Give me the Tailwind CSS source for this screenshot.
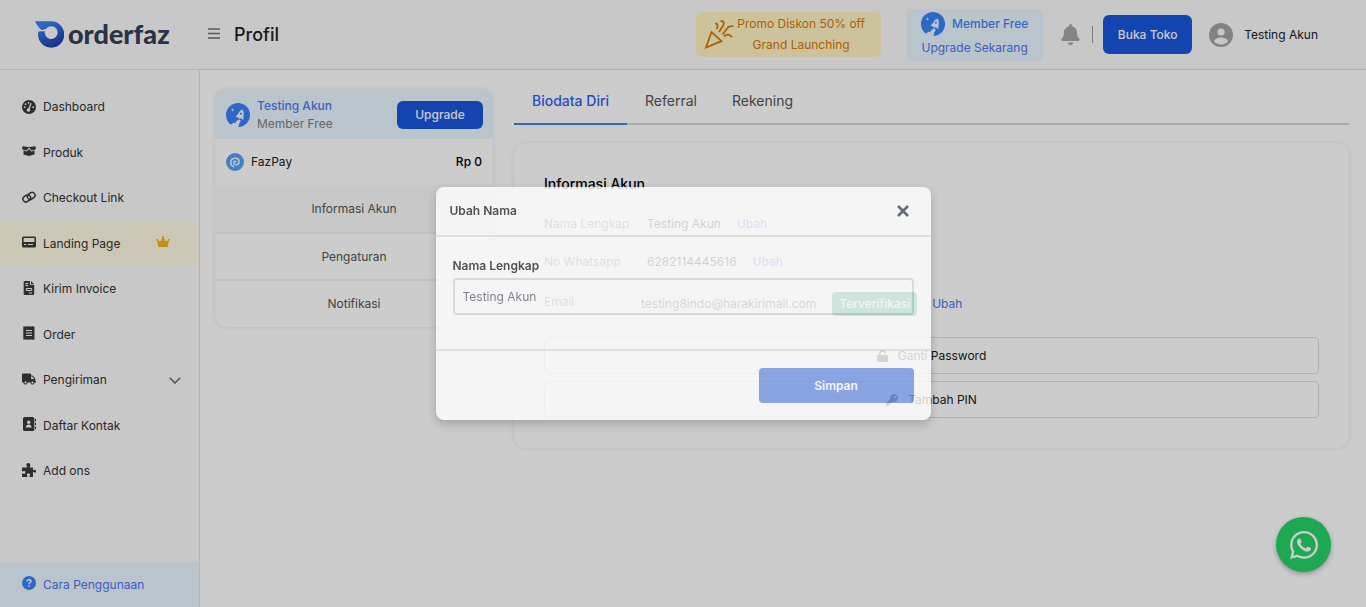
<!DOCTYPE html>
<html lang="id">
<head>
<meta charset="utf-8">
<meta name="viewport" content="width=device-width, initial-scale=1">
<title>Profil - orderfaz</title>
<script src="https://cdn.jsdelivr.net/npm/@tailwindcss/browser@4"></script>
</head>
<body class="flex h-screen flex-col overflow-hidden bg-white font-['Inter','Liberation_Sans',sans-serif] text-xs leading-5 text-[#333]">

<svg class="hidden">
  <symbol id="rocket" viewBox="0 0 24 24">
    <circle cx="12" cy="12" r="12" fill="#3b82f6"/>
    <path fill="#e8f5ff" d="M2.500 24c0-2 1.500-3.200 3.300-2.600.5-1.700 2.400-2.200 3.500-1.200.6-1.600 1.600-3 3.200-3.700l1.800.4c.6 1.300 0 2.700-1.400 3.600.6 1.100.2 2.500-.9 3.500z"/>
    <path fill="#edf6ff" d="M16.500 6.500c-2.200.8-3.500 2.200-4.200 4.200l-3 3.200 2.500.3 1.200 1.500 1.600-.4 2.600 1.800.4-4.600c.5-2.100.2-4.200-1.100-6zM6.500 5l.5 1.400 1.400.5-1.400.5-.5 1.400L6 7.400l-1.400-.5L6 6.400z"/>
    <circle cx="14.900" cy="10.800" r="1" fill="#3b82f6"/>
  </symbol>
</svg>

<header class="flex h-[70px] shrink-0 items-center border-b border-[#e1e1e1] bg-[#fafafa]">
  <a href="#" aria-label="orderfaz" class="ml-[35px] flex w-[172px] items-center gap-1">
    <svg class="h-[27px] w-[29px] shrink-0" viewBox="0 0 86 80">
      <defs><linearGradient id="lg" x1="0" y1="0" x2=".6" y2="1"><stop offset=".2" stop-color="#3b82f6"/><stop offset="1" stop-color="#1e40af"/></linearGradient></defs>
      <path fill="url(#lg)" d="M0 1H48A39 39 0 1 1 9 40V35Q9 30 14 30L29.500 30A19 19 0 1 0 32 24L20 26.500C12 22 5 12 0 1z"/>
    </svg>
    <span class="pb-[2px] font-['Lato','Inter',sans-serif] text-[27px] leading-7 font-black text-[#334155]">orderfaz</span>
  </a>
  <button type="button" aria-label="Menu" class="flex h-6 w-[14px] items-center pb-[2px]">
    <svg class="ml-px h-[11px] w-3" viewBox="0 0 12 11" fill="none" stroke="#707070" stroke-width="1.500"><path d="M0 1h12M0 5.500h12M0 10h12"/></svg>
  </button>
  <h1 class="ml-[13px] text-lg font-medium text-[#222]">Profil</h1>

  <div class="ml-auto flex items-center">
    <a href="#" class="flex h-[45px] w-[185px] items-center rounded-md bg-[#fff4c4] pb-px pl-2 text-[#d97706]">
      <svg class="h-[30px] w-[30px] shrink-0" viewBox="0 0 30 30" fill="none" stroke="currentColor" stroke-width="1.800"><path d="M2 28.500L7.500 13l10 9.200zM11 4.500c3 0 3.500 2.500 1.500 5.500M16.500 2c4 0 4 3 2 5.500l-3.500 5.500M29.500 7.500c-3-1-4-.5-5.500 1l-5.500 7M20 17.500c3-3 6-2 8 .8"/></svg>
      <span class="w-[134px] text-center leading-[21px] whitespace-nowrap">Promo Diskon 50% off<br>Grand Launching</span>
    </a>
    <a href="#" class="ml-[25px] flex h-[52px] w-[137px] flex-col items-center justify-center rounded-md bg-[#e8f5ff] pt-[2px] text-[#3f83f8]">
      <span class="flex items-center gap-[7px] font-medium"><svg class="h-6 w-6"><use href="#rocket"/></svg>Member Free</span>
      <span class="leading-6 text-[#4f74f4]">Upgrade Sekarang</span>
    </a>
    <button type="button" aria-label="Notifikasi" class="ml-[18px]">
      <svg class="h-[21px] w-[19px]" viewBox="0 0 448 512" fill="#a5a5a5"><path d="M224 512c35.300 0 63.900-28.600 63.900-64H160.100c0 35.400 28.600 64 63.900 64zm215.400-149.700c-19.300-20.800-55.500-52-55.500-154.300 0-77.700-54.500-139.900-127.900-155.200V32c0-17.700-14.300-32-32-32s-32 14.300-32 32v20.800C118.600 68.100 64.100 130.300 64.100 208c0 102.300-36.200 133.500-55.500 154.300-6 6.500-8.700 14.200-8.600 21.700.1 16.400 13 32 32.100 32h383.800c19.100 0 32-15.600 32.100-32 .1-7.500-2.600-15.300-8.600-21.700z"/></svg>
    </button>
    <span class="ml-3 h-[17px] w-px bg-[#999]"></span>
    <button type="button" class="ml-[10px] h-[39px] w-[89px] rounded-md bg-[#1a56db] font-medium text-white">Buka Toko</button>
    <a href="#" class="mr-12 ml-[17px] flex items-center gap-[11px] text-[#222]">
      <svg class="h-6 w-6" viewBox="0 0 24 24"><circle cx="12" cy="12" r="12" fill="#a3a3a3"/><circle cx="12" cy="9" r="3.600" fill="#fafafa"/><path fill="#fafafa" d="M5 18.500c1-3 4-4 7-4s6 1 7 4c-4 4-10 4-14 0z"/></svg>
      Testing Akun
    </a>
  </div>
</header>

<div class="flex min-h-0 flex-1">
  <aside class="flex w-[200px] shrink-0 flex-col border-r border-[#e1e1e1] bg-[#fafafa] pt-[15px]">
    <nav class="flex h-[408px] flex-col justify-between">
      <a href="#" class="flex h-11 items-center gap-[7px] pl-[22px]"><svg class="h-[14px] w-[14px]" viewBox="0 0 14 14"><circle cx="7" cy="7" r="7" fill="#3a3a3a"/><path d="M6.500 10L9 3.200" stroke="#fafafa" stroke-width="1.300"/><g fill="#fafafa"><circle cx="6.500" cy="10" r="1.800"/><circle cx="6.500" cy="2.800" r=".9"/><circle cx="3.600" cy="4.200" r=".9"/><circle cx="2.700" cy="7.200" r=".9"/><circle cx="11.200" cy="7.200" r=".9"/></g></svg>Dashboard</a>
      <a href="#" class="flex h-11 items-center gap-[7px] pl-[22px]"><svg class="mb-1 h-[14px] w-[14px]" viewBox="0 0 14 14" fill="#3a3a3a"><path d="M.6 2.200L7 3l6.400-.8L14 5.200l-4.300 1.200L7 3.500 4.300 6.400 0 5.200zM1.500 6.500l3.200.9L7 5l2.300 2.400 3.200-.9v4L7 12l-5.500-1.500z"/></svg>Produk</a>
      <a href="#" class="flex h-11 items-center gap-[7px] pl-[22px]"><svg class="mb-[2px] h-[14px] w-[14px]" viewBox="0 0 14 14" fill="none" stroke="#3a3a3a" stroke-width="1.500"><rect x="-4" y="-2.900" width="8" height="5.800" rx="2.900" transform="translate(4.800 8.400) rotate(-35)"/><rect x="-4" y="-2.900" width="8" height="5.800" rx="2.900" transform="translate(9.200 5.900) rotate(-35)"/></svg>Checkout Link</a>
      <a href="#" class="flex h-11 items-center gap-[7px] bg-[#fffae7] pl-[22px]"><svg class="mb-[3px] h-[14px] w-[14px]" viewBox="0 0 14 14"><path fill="#3a3a3a" fill-rule="evenodd" d="M1.500 1.500h11A1.500 1.500 0 0 1 14 3v8a1.500 1.500 0 0 1-1.500 1.500h-11A1.500 1.500 0 0 1 0 11V3a1.500 1.500 0 0 1 1.500-1.500zM1.600 3v4h10.800V3zM2 9v1.100h2.500V9zM6 9v1.100h5V9z"/></svg>Landing Page<svg class="mr-[29px] mb-1 ml-auto h-[11px] w-[14px]" viewBox="0 0 640 512" preserveAspectRatio="none" fill="#f4b622"><path d="M544 430H96v82h448zM592 128c-26.500 0-48 21.500-48 48 0 7.100 1.600 13.700 4.400 19.800L476 239.200c-15.400 9.200-35.300 4-44.200-11.600L350.300 85C361 76.200 368 63 368 48c0-26.500-21.500-48-48-48s-48 21.500-48 48c0 15 7 28.200 17.700 37l-81.500 142.600c-8.900 15.600-28.900 20.800-44.200 11.600l-72.300-43.400c2.700-6 4.400-12.700 4.400-19.800 0-26.500-21.500-48-48-48S0 149.500 0 176s21.500 48 48 48c2.600 0 5.200-.4 7.700-.8L98 470h444l42.300-246.800c2.500.4 5.100.8 7.700.8 26.500 0 48-21.500 48-48s-21.500-48-48-48z"/></svg></a>
      <a href="#" class="flex h-11 items-center gap-[7px] pl-[22px]"><svg class="mb-[3px] h-[14px] w-[14px]" viewBox="0 0 14 14"><path fill="#3a3a3a" d="M2 0h6v4h4.200v9q0 1-1 1H2.700q-1 0-1-1V1q0-1 1-1zM9 0l3.200 3.200H9z"/><path fill="none" stroke="#fafafa" d="M3.300 2.500h3M3.300 4.500h3M4.300 7.500h5.400v2H4.300zM7 12h3"/></svg>Kirim Invoice</a>
      <a href="#" class="flex h-11 items-center gap-[7px] pl-[22px]"><svg class="mb-[3px] h-[14px] w-[14px]" viewBox="0 0 14 14"><path fill="#3a3a3a" d="M1.300.2l1 .5L3.500 0l1.200.7L5.800 0 7 .7 8.200 0l1.100.7 1.200-.7 1.200.7.800-.5v13.600l-.8-.5-1.200.7-1.200-.7-1.100.7-1.200-.7-1.200.7-1.100-.7-1.200.7-1.200-.7-1 .5z"/><path stroke="#fafafa" stroke-width="1.100" d="M4 4.500h6M4 7h6M4 9.500h6"/></svg>Order</a>
      <a href="#" class="flex h-11 items-center gap-[7px] pl-[22px]"><svg class="mb-[3px] h-[12px] w-[14px]" viewBox="0 0 640 512" fill="#3a3a3a"><path d="M624 352h-16V243.900c0-12.700-5.100-24.900-14.100-33.900L494 110.100c-9-9-21.200-14.100-33.900-14.100H416V48c0-26.500-21.500-48-48-48H48C21.500 0 0 21.500 0 48v320c0 26.500 21.500 48 48 48h16c0 53 43 96 96 96s96-43 96-96h128c0 53 43 96 96 96s96-43 96-96h48c8.800 0 16-7.200 16-16v-32c0-8.800-7.200-16-16-16zM160 464c-26.500 0-48-21.500-48-48s21.500-48 48-48 48 21.500 48 48-21.500 48-48 48zm320 0c-26.500 0-48-21.500-48-48s21.500-48 48-48 48 21.500 48 48-21.500 48-48 48zm80-208H416V144h44.100l99.900 99.900V256z"/></svg>Pengiriman<svg class="mr-[18px] ml-auto h-[7px] w-3" viewBox="0 0 12 7" fill="none" stroke="#666" stroke-width="1.500"><path d="M.8.800L6 6 11.200.8"/></svg></a>
      <a href="#" class="flex h-11 items-center gap-[7px] pl-[22px]"><svg class="mb-[3px] h-[14px] w-[14px]" viewBox="0 0 14 14"><path fill="#3a3a3a" d="M2.500 0h8.300q1.500 0 1.500 1.500v11q0 1.500-1.500 1.500H2.500Q1 14 1 12.500v-11Q1 0 2.500 0zM13 1.800h1v2.500h-1zM13 5.800h1v2.500h-1zM13 9.800h1v2.500h-1z"/><circle cx="6.700" cy="5.200" r="1.700" fill="#fafafa"/><path fill="#fafafa" d="M3.700 10.500q.4-3 3-3t3 3z"/></svg>Daftar Kontak</a>
      <a href="#" class="flex h-11 items-center gap-[7px] pl-[22px]"><svg class="mb-[2px] h-[14px] w-[14px]" viewBox="0 0 14 14" fill="#3a3a3a"><path d="M0 4.500h4.800c.6-.8-.4-1.300-.4-2.500C4.400.9 5.200 0 6.400 0S8.300.9 8.300 2c0 1.200-.9 1.700-.4 2.500H11v2.700c.7.500 1-.5 1.700-.5.800 0 1.300.6 1.300 1.500s-.5 1.500-1.300 1.500c-.7 0-1-.9-1.700-.5V14H7.600c-.6-.8.500-1.200.5-2.200 0-.8-.7-1.300-1.600-1.300s-1.600.5-1.600 1.300c0 1 1 1.400.4 2.200H0v-3.500c.8-.5 1.100.4 1.900.4.900 0 1.400-.6 1.400-1.500S2.800 8 1.900 8C1.100 8 .8 8.800 0 8.300z"/></svg>Add ons</a>
    </nav>
    <a href="#" class="mt-auto flex h-[45px] items-center gap-[7px] bg-[#e8f5ff] pl-[22px] text-[#4f74f4]"><svg class="mb-[3px] h-[14px] w-[14px]" viewBox="0 0 14 14"><circle cx="7" cy="7" r="7" fill="#3b82f6"/><path fill="none" stroke="#e8f5ff" stroke-width="1.500" d="M5 5.500c0-2.400 4-2.200 4-.2 0 1.500-2 1.300-2 2.900M7 9.300v1.500"/></svg>Cara Penggunaan</a>
  </aside>

  <main class="flex min-w-0 flex-1 items-start pr-[17px] pl-[15px]">
    <section class="mt-[19px] w-[278px] shrink-0 overflow-hidden rounded-xl shadow-[0_0_4px_rgba(0,0,0,0.1)]">
      <div class="flex h-[50px] items-center bg-[#e8f5ff] pt-[2px] pr-[10px] pl-[11px]">
        <svg class="h-6 w-6"><use href="#rocket"/></svg>
        <div class="ml-[7px] leading-[18px]">
          <p class="font-medium text-[#4b7bf5]">Testing Akun</p>
          <p class="text-[#808080]">Member Free</p>
        </div>
        <button type="button" class="ml-auto h-7 w-[86px] rounded-md bg-[#1a56db] font-medium text-white">Upgrade</button>
      </div>
      <div class="flex h-[46px] items-center px-[11px] text-[#222]">
        <svg class="h-[18px] w-[18px]" viewBox="0 0 18 18"><circle cx="9" cy="9" r="9" fill="#56a0f5"/><path fill="none" stroke="#f0f7ff" stroke-width="1.500" d="M9.800 9.300c-.3-1.600-2.100-1.200-2 .4.200 3.300 5.600 2.300 5.400-1.200-.3-4.800-8.500-4.300-8.400.9 0 2.200 1.200 3.700 3.200 4.400"/></svg>
        <span class="ml-[7px]">FazPay</span>
        <span class="ml-auto font-medium text-black">Rp 0</span>
      </div>
      <nav class="flex flex-col text-center text-[#555]">
        <a href="#" class="h-[49px] border-b-2 border-[#f2f2f2] bg-[#fafafa] leading-[47px]">Informasi Akun</a>
        <a href="#" class="h-[47px] border-b-2 border-[#f2f2f2] leading-[46px]">Pengaturan</a>
        <a href="#" class="h-[46px] leading-[46px]">Notifikasi</a>
      </nav>
    </section>

    <div class="ml-[21px] min-w-0 flex-1">
      <nav class="flex h-[55px] border-b-2 border-[#d4d6d6] text-sm text-[#555]">
        <a href="#" class="h-[55px] border-b-2 border-[#3b82f6] px-[18px] pt-[21px] font-medium text-[#2f63ee]">Biodata Diri</a>
        <a href="#" class="px-[18px] pt-[21px]">Referral</a>
        <a href="#" class="px-[17px] pt-[21px]">Rekening</a>
      </nav>
      <section class="mt-[18px] rounded-xl px-[30px] pt-[31px] pb-[30px] shadow-[0_0_4px_rgba(0,0,0,0.1)]">
        <h2 class="text-sm font-medium text-black">Informasi Akun</h2>
        <div class="mt-5 flex text-[#222]"><span class="w-[103px] text-[#777]">Nama Lengkap</span>Testing Akun<a href="#" class="ml-4 text-[#4f74f4]">Ubah</a></div>
        <div class="mt-[18px] flex text-[#222]"><span class="w-[103px] text-[#777]">No Whatsapp</span>6282114445616<a href="#" class="ml-4 text-[#4f74f4]">Ubah</a></div>
        <div class="mt-5 flex h-6 items-center text-[#444]"><span class="w-[97px] pb-[5px] text-[#777]">Email</span>testing8indo@harakirimail.com<span class="ml-4 h-6 rounded bg-[#0e9f6e] px-[7px] leading-6 font-medium text-white">Terverifikasi</span><a href="#" class="ml-[15px] text-[#4f74f4]">Ubah</a></div>
        <button type="button" class="mt-[21px] flex h-[37px] w-full items-center justify-center gap-[10px] rounded border border-[#d9dde3] text-[#222]">
          <svg class="h-3 w-[11px]" viewBox="0 0 11 12"><rect y="5" width="11" height="7" rx="1.200" fill="#333"/><path fill="none" stroke="#333" stroke-width="1.500" d="M3 5.500V3.300c0-3.300 5-3.300 5 0"/></svg>Ganti Password
        </button>
        <button type="button" class="mt-[7px] flex h-[37px] w-full items-center justify-center gap-[10px] rounded border border-[#d9dde3] text-[#222]">
          <svg class="h-3 w-3" viewBox="0 0 12 12"><path fill="#333" fill-rule="evenodd" d="M8 0a4 4 0 1 1-1.300 7.800L5.500 9H4.300v1.500H2.800V12H0V9.300l4.200-4.200A4 4 0 0 1 8 0zm1 2a1 1 0 1 0 .01 0z"/></svg>Tambah PIN
        </button>
      </section>
    </div>
  </main>
</div>

<a href="#" aria-label="WhatsApp" class="fixed right-[35px] bottom-[35px] flex h-[55px] w-[55px] items-center justify-center rounded-full bg-[#25d366] shadow-[0_2px_5px_rgba(0,0,0,0.3)]">
  <svg class="h-7 w-7" viewBox="0 32 448 448" fill="#fff"><path d="M380.900 97.100C339 55.100 283.200 32 223.900 32c-122.400 0-222 99.600-222 222 0 39.100 10.200 77.300 29.600 111L0 480l117.700-30.900c32.400 17.700 68.900 27 106.100 27h.1c122.300 0 224.100-99.600 224.100-222 0-59.300-25.200-115-67.100-157zm-157 341.600c-33.200 0-65.700-8.900-94-25.700l-6.700-4-69.800 18.300L72 359.200l-4.400-7c-18.500-29.400-28.200-63.300-28.200-98.200 0-101.700 82.800-184.500 184.600-184.500 49.300 0 95.600 19.200 130.400 54.100 34.800 34.900 56.200 81.200 56.100 130.500 0 101.800-84.900 184.600-186.600 184.600zm101.200-138.200c-5.500-2.800-32.800-16.200-37.900-18-5.100-1.900-8.800-2.800-12.500 2.800-3.700 5.600-14.300 18-17.600 21.800-3.200 3.700-6.500 4.200-12 1.400-32.600-16.300-54-29.100-75.500-66-5.700-9.800 5.700-9.100 16.300-30.300 1.800-3.700.9-6.900-.5-9.700-1.400-2.800-12.500-30.100-17.100-41.200-4.500-10.800-9.100-9.300-12.500-9.500-3.200-.2-6.900-.2-10.600-.2-3.700 0-9.700 1.400-14.800 6.900-5.100 5.600-19.400 19-19.400 46.300 0 27.300 19.900 53.700 22.600 57.400 2.800 3.700 39.100 59.700 94.800 83.800 35.200 15.200 49 16.500 66.600 13.900 10.700-1.600 32.800-13.400 37.400-26.400 4.600-13 4.600-24.100 3.200-26.400-1.300-2.500-5-3.900-10.500-6.600z"/></svg>
</a>

<div class="fixed inset-0 flex items-center justify-center bg-black/20">
  <div role="dialog" aria-labelledby="dialog-title" class="w-[495px] rounded-lg bg-white opacity-80 shadow-[0_4px_10px_rgba(0,0,0,0.25)]">
    <div class="flex h-[50px] items-center justify-between border-b-2 border-[#e5e5e5] pr-[21px] pl-[14px]">
      <h2 id="dialog-title" class="text-xs font-semibold text-[#333]">Ubah Nama</h2>
      <button type="button" aria-label="Tutup" class="flex h-6 w-[14px] items-center justify-center"><svg class="h-3 w-3" viewBox="0 0 12 12" stroke="#4b5563" stroke-width="2.600"><path d="M1 1l10 10M11 1L1 11"/></svg></button>
    </div>
    <form class="px-[17px] pt-[19px]">
      <label for="nama" class="block text-xs leading-5 font-semibold text-[#333]">Nama Lengkap</label>
      <input id="nama" type="text" value="Testing Akun" class="mt-[2px] block h-[37px] w-full rounded border-2 border-[#dcdee6] bg-transparent px-2 text-xs text-[#6b7280]">
    </form>
    <div class="mt-[34px] flex h-[71px] items-start justify-end border-t-2 border-[#e5e5e5] px-[17px] pt-[17px]">
      <button type="button" class="h-[35px] w-[155px] rounded bg-[#7a9ae8] text-xs font-semibold text-white">Simpan</button>
    </div>
  </div>
</div>
</body>
</html>
